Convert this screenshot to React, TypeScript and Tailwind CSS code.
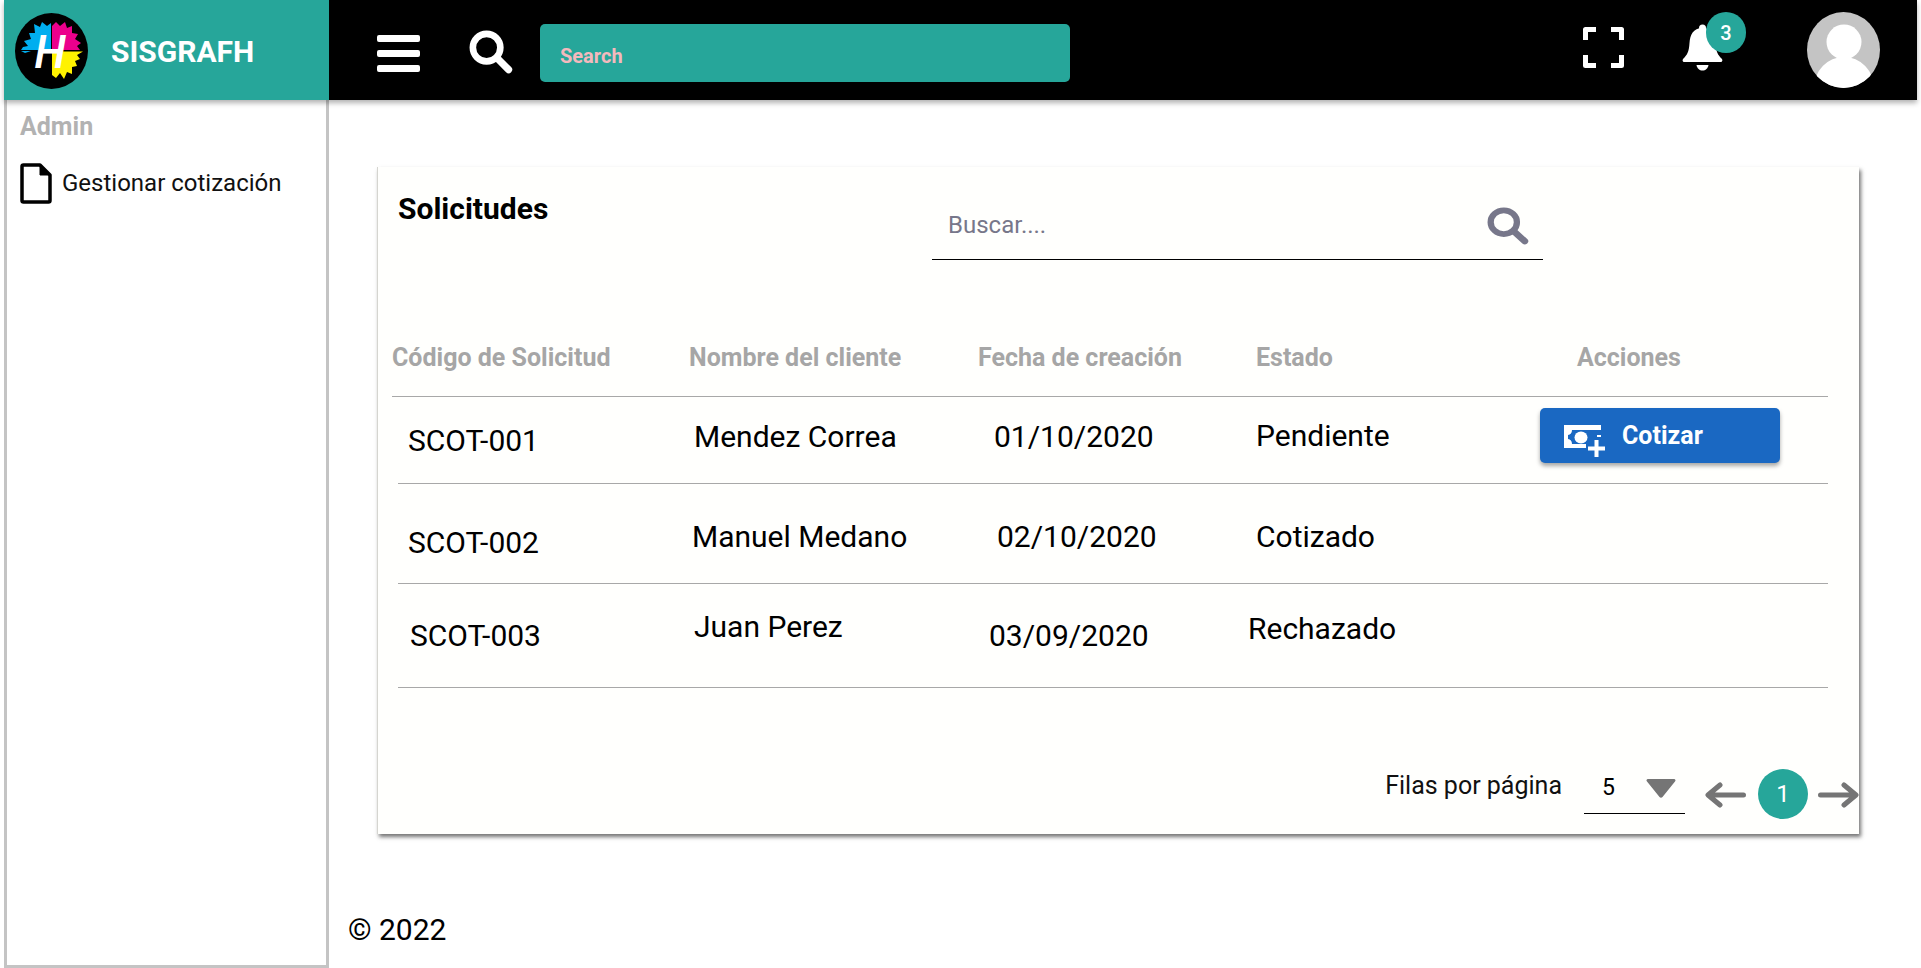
function Logo() {
  return (
    <svg width="73" height="76" viewBox="0 0 73 76" className="shrink-0">
      <ellipse cx="36.5" cy="38" rx="36.5" ry="38" fill="#000" />
      <path d="M36 37 L6 37 L8 34 L13 33 L9 28 L16 26 L14 20 L20 20 L19 11 L25 14 L27 9 L32 13 L36 10Z" fill="#00aeef" />
      <path d="M37 37 L65 37 L62 33 L66 30 L60 26 L63 21 L57 20 L57 13 L52 15 L50 9 L45 13 L41 9 L37 13Z" fill="#ec008c" />
      <path d="M37 38.500 L68 38.500 L62 42 L65 46 L60 48 L62 53 L57 54 L57 61 L52 59 L49 66 L45 60 L41 65 L37 62Z" fill="#fff200" />
      <path d="M6 38 L16 38 L10 40Z" fill="#00aeef" />
      <text x="35" y="55" textAnchor="middle" fontFamily="Roboto, sans-serif" fontStyle="italic" fontWeight="500" fontSize="46" fill="#fff">H</text>
    </svg>
  );
}

function Menu() {
  return (
    <svg width="43" height="37" viewBox="0 0 43 37" className="shrink-0">
      <rect x="0" y="0" width="43" height="7" rx="2" fill="#fff" />
      <rect x="0" y="15" width="43" height="7" rx="2" fill="#fff" />
      <rect x="0" y="30" width="43" height="7" rx="2" fill="#fff" />
    </svg>
  );
}

function Lens({ size, color, h }: { size: number; color: string; h?: number }) {
  return (
    <svg width={size} height={h ?? size} viewBox="0 0 40 40" preserveAspectRatio="none" className="shrink-0">
      <circle cx="16" cy="16" r="12.5" fill="none" stroke={color} strokeWidth="6" />
      <line x1="25.5" y1="25.5" x2="36" y2="36" stroke={color} strokeWidth="6.5" strokeLinecap="round" />
    </svg>
  );
}

function Expand() {
  return (
    <svg width="41" height="41" viewBox="0 0 41 41" fill="none" stroke="#fff" strokeWidth="5" strokeLinejoin="round" className="shrink-0">
      <path d="M2.5 13V2.5H13M28 2.5H38.5V13M38.5 28V38.5H28M13 38.5H2.5V28" />
    </svg>
  );
}

function Bell() {
  return (
    <svg width="41" height="47" viewBox="0 0 41 47" fill="#fff" className="shrink-0">
      <circle cx="20.5" cy="4" r="3.5" />
      <path d="M20.5 4C11 4 8 11 7.5 19 7 28 5 31 1.5 34.5 0 36 .5 38 2.5 38H38.5C40.500 38 41 36 39.500 34.500 36 31 34 28 33.500 19 33 11 30 4 20.5 4Z" />
      <path d="M14.500 41H26.500C26 44.500 23.500 46.500 20.500 46.500S15 44.500 14.500 41Z" />
    </svg>
  );
}

function Avatar() {
  return (
    <svg width="73" height="76" viewBox="0 0 73 76" className="shrink-0">
      <defs>
        <clipPath id="avatar-clip">
          <ellipse cx="36.500" cy="38" rx="36.500" ry="38" />
        </clipPath>
      </defs>
      <ellipse cx="36.500" cy="38" rx="36.500" ry="38" fill="#c4c4c4" />
      <g clipPath="url(#avatar-clip)" fill="#fff">
        <circle cx="37" cy="30" r="17.500" />
        <ellipse cx="37" cy="76" rx="30" ry="31" />
      </g>
    </svg>
  );
}

function Doc() {
  return (
    <svg width="32" height="41" viewBox="0 0 32 41" fill="none" stroke="#000" strokeWidth="3.5" strokeLinejoin="round" className="shrink-0">
      <path d="M2 3.500C2 2.500 2.500 2 3.500 2H20L30 12V37.500C30 38.500 29.500 39 28.500 39H3.500C2.500 39 2 38.500 2 37.500Z" />
      <path d="M20 2V12H30" fill="#000" strokeWidth="1" />
    </svg>
  );
}

function CashPlus() {
  return (
    <svg width="41" height="32" viewBox="0 0 41 32" className="shrink-0">
      <rect x="0" y="0" width="37" height="23" fill="#fff" />
      <path d="M8 5H37V10H33V19H8C8 16 6.500 14.500 4 14V10C6.500 9.500 8 8 8 5Z" fill="#1a68c2" />
      <ellipse cx="17" cy="12.500" rx="6.500" ry="6" fill="#fff" />
      <path d="M27 12H38V19H41V28H38V32H27V28H22V19H27Z" fill="#1a68c2" />
      <path d="M30.500 15H34.500V21.500H41V25.500H34.500V32H30.500V25.500H24V21.500H30.500Z" fill="#fff" />
    </svg>
  );
}

function ArrowLeft() {
  return (
    <svg width="41" height="26" viewBox="0 0 41 26" fill="none" stroke="#757575" strokeWidth="5" strokeLinecap="round" strokeLinejoin="round" className="shrink-0">
      <path d="M38.500 13H5M15 3L3 13L15 23" />
    </svg>
  );
}

function ArrowRight() {
  return (
    <svg width="41" height="26" viewBox="0 0 41 26" fill="none" stroke="#757575" strokeWidth="5" strokeLinecap="round" strokeLinejoin="round" className="shrink-0">
      <path d="M2.500 13H36M26 3L38 13L26 23" />
    </svg>
  );
}

function Caret() {
  return (
    <svg width="30" height="19" viewBox="0 0 30 19" className="shrink-0">
      <path d="M2 0H28C29.500 0 30 1.500 29 2.500L16.500 18C15.700 19 14.300 19 13.500 18L1 2.500C0 1.500 .5 0 2 0Z" fill="#757575" />
    </svg>
  );
}

export default function App() {
  return (
    <div className="w-[1921px] h-[968px] bg-white overflow-hidden pl-1 pr-1 flex flex-col font-['Roboto',sans-serif] text-black">
      <header className="h-[100px] shrink-0 flex bg-black relative z-10 shadow-[0_3px_5px_rgba(0,0,0,0.3)]">
        <div className="w-[325px] bg-[#26a69a] flex items-center pl-[11px] pt-[2px]">
          <Logo />
          <span className="ml-[23px] mt-[1px] text-[30px] font-bold text-white leading-none">SISGRAFH</span>
        </div>
        <div className="flex-1 flex items-center pl-[48px] pr-[37px]">
          <div className="mt-[6px]"><Menu /></div>
          <div className="ml-[49px] mt-[4px]"><Lens size={44} color="#fff" /></div>
          <div className="ml-[27px] mt-[6px] w-[530px] h-[58px] rounded-[5px] bg-[#26a69a] flex items-center pl-5 pt-[5px] text-[20px] font-bold text-[#f4b9bd]">Search</div>
          <div className="ml-auto mt-[-6px]"><Expand /></div>
          <div className="ml-[58px] relative mt-[-5px]">
            <Bell />
            <span className="absolute left-[24px] top-[-12px] w-[40px] h-[41px] rounded-full bg-[#26a69a] text-white text-[20px] font-medium flex items-center justify-center">3</span>
          </div>
          <div className="ml-[84px]"><Avatar /></div>
        </div>
      </header>
      <div className="flex-1 flex min-h-0">
        <aside className="w-[325px] shrink-0 border-[3px] border-t-0 border-[#c4c4c4] pl-[13px] pt-[13px]">
          <div className="text-[25px] font-bold text-[#b2b2b2] leading-[28px]">Admin</div>
          <div className="flex items-center mt-[22px]">
            <Doc />
            <span className="ml-[10px] mb-[2px] text-[24px] leading-[28px] text-[#111]">Gestionar cotización</span>
          </div>
        </aside>
        <main className="flex-1 pl-[48px] pr-[58px] pt-[67px] flex flex-col">
          <section className="h-[667px] bg-[#fffffd] border-l border-[#d5d5d0] shadow-[2px_3px_4px_rgba(0,0,0,0.55)] flex flex-col">
            <div className="h-[93px] flex shrink-0">
              <h2 className="ml-[20px] mt-[24px] w-[160px] text-[30px] leading-[36px] font-bold h-[36px]">Solicitudes</h2>
              <div className="ml-[374px] w-[611px] border-b border-black flex items-start pl-4 pr-[14px]">
                <span className="mt-[42px] text-[24px] leading-[32px] text-[#77778a]">Buscar....</span>
                <div className="ml-auto mt-[40px]"><Lens size={42} color="#77778a" h={38} /></div>
              </div>
            </div>
            <div className="h-[137px] shrink-0 ml-[14px] w-[1436px] border-b border-[#a8a8a8] flex items-end pb-[22px] text-[25px] leading-[32px] font-bold text-[#a6a6a6]">
              <span className="w-[297px]">Código de Solicitud</span>
              <span className="w-[289px]">Nombre del cliente</span>
              <span className="w-[278px]">Fecha de creación</span>
              <span className="w-[321px]">Estado</span>
              <span>Acciones</span>
            </div>
            <div className="h-[87px] shrink-0 ml-[20px] w-[1430px] border-b border-[#a8a8a8] flex text-[30px] leading-[36px]">
              <span className="w-[296px] pl-[10px] pt-[26px]">SCOT-001</span>
              <span className="w-[300px] pt-[22px]">Mendez Correa</span>
              <span className="w-[262px] pt-[22px]">01/10/2020</span>
              <span className="w-[284px] pt-[21px]">Pendiente</span>
              <button className="mt-[11px] w-[240px] h-[55px] rounded-[5px] bg-[#1a68c2] shadow-[0_3px_4px_rgba(0,0,0,0.35)] flex items-center pl-6 text-white text-[25px] font-bold leading-none">
                <div className="mt-[10px]"><CashPlus /></div>
                <span className="ml-[17px]">Cotizar</span>
              </button>
            </div>
            <div className="h-[100px] shrink-0 ml-[20px] w-[1430px] border-b border-[#a8a8a8] flex text-[30px] leading-[36px]">
              <span className="w-[294px] pl-[10px] pt-[41px]">SCOT-002</span>
              <span className="w-[305px] pt-[35px]">Manuel Medano</span>
              <span className="w-[259px] pt-[35px]">02/10/2020</span>
              <span className="pt-[35px]">Cotizado</span>
            </div>
            <div className="h-[104px] shrink-0 ml-[20px] w-[1430px] border-b border-[#a8a8a8] flex text-[30px] leading-[36px]">
              <span className="w-[296px] pl-[12px] pt-[34px]">SCOT-003</span>
              <span className="w-[295px] pt-[25px]">Juan Perez</span>
              <span className="w-[259px] pt-[34px]">03/09/2020</span>
              <span className="pt-[27px]">Rechazado</span>
            </div>
            <div className="flex-1 flex items-start justify-end">
              <span className="mt-[82px] text-[25px] leading-[32px] text-[#111]">Filas por página</span>
              <div className="ml-[22px] mt-[71px] w-[101px] h-[55px] border-b border-black flex items-start pl-[18px]">
                <span className="mt-[13px] text-[23px] leading-[32px]">5</span>
                <div className="ml-[31px] mt-[20px]"><Caret /></div>
              </div>
              <div className="ml-[20px] mt-[94px]"><ArrowLeft /></div>
              <div className="ml-[12px] mt-[81px] w-[50px] h-[50px] rounded-full bg-[#26a69a] text-white text-[24px] flex items-center justify-center">1</div>
              <div className="ml-[10px] mt-[94px]"><ArrowRight /></div>
            </div>
          </section>
          <div className="ml-[-29px] mt-[78px] text-[30px] leading-[36px]">© 2022</div>
        </main>
      </div>
    </div>
  );
}
